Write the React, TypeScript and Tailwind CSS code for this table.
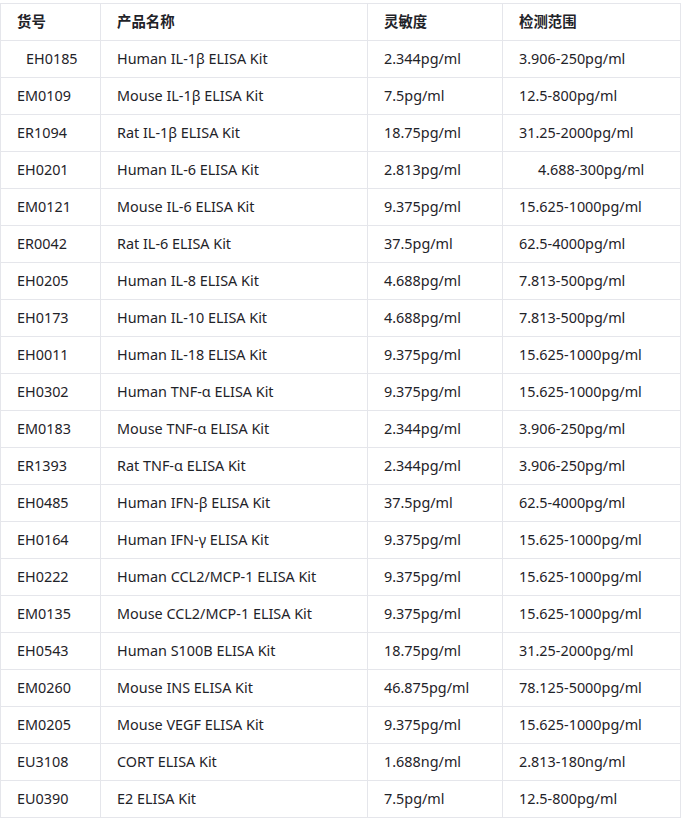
import React from 'react';

const rows = [
  ["EH0185", "Human IL-1β ELISA Kit", "2.344pg/ml", "3.906-250pg/ml"],
  ["EM0109", "Mouse IL-1β ELISA Kit", "7.5pg/ml", "12.5-800pg/ml"],
  ["ER1094", "Rat IL-1β ELISA Kit", "18.75pg/ml", "31.25-2000pg/ml"],
  ["EH0201", "Human IL-6 ELISA Kit", "2.813pg/ml", "4.688-300pg/ml"],
  ["EM0121", "Mouse IL-6 ELISA Kit", "9.375pg/ml", "15.625-1000pg/ml"],
  ["ER0042", "Rat IL-6 ELISA Kit", "37.5pg/ml", "62.5-4000pg/ml"],
  ["EH0205", "Human IL-8 ELISA Kit", "4.688pg/ml", "7.813-500pg/ml"],
  ["EH0173", "Human IL-10 ELISA Kit", "4.688pg/ml", "7.813-500pg/ml"],
  ["EH0011", "Human IL-18 ELISA Kit", "9.375pg/ml", "15.625-1000pg/ml"],
  ["EH0302", "Human TNF-α ELISA Kit", "9.375pg/ml", "15.625-1000pg/ml"],
  ["EM0183", "Mouse TNF-α ELISA Kit", "2.344pg/ml", "3.906-250pg/ml"],
  ["ER1393", "Rat TNF-α ELISA Kit", "2.344pg/ml", "3.906-250pg/ml"],
  ["EH0485", "Human IFN-β ELISA Kit", "37.5pg/ml", "62.5-4000pg/ml"],
  ["EH0164", "Human IFN-γ ELISA Kit", "9.375pg/ml", "15.625-1000pg/ml"],
  ["EH0222", "Human CCL2/MCP-1 ELISA Kit", "9.375pg/ml", "15.625-1000pg/ml"],
  ["EM0135", "Mouse CCL2/MCP-1 ELISA Kit", "9.375pg/ml", "15.625-1000pg/ml"],
  ["EH0543", "Human S100B ELISA Kit", "18.75pg/ml", "31.25-2000pg/ml"],
  ["EM0260", "Mouse INS ELISA Kit", "46.875pg/ml", "78.125-5000pg/ml"],
  ["EM0205", "Mouse VEGF ELISA Kit", "9.375pg/ml", "15.625-1000pg/ml"],
  ["EU3108", "CORT ELISA Kit", "1.688ng/ml", "2.813-180ng/ml"],
  ["EU0390", "E2 ELISA Kit", "7.5pg/ml", "12.5-800pg/ml"],
];

const cell = "border border-[#e5e6eb] h-[37px] px-4 py-0 text-left align-middle";

const App = () => {
  return (
    <div className="bg-white w-[682px] h-[821px] pt-[3px] text-[14.4px] text-[#1f2329]" style={{ fontFamily: '"Noto Sans", "Noto Sans CJK SC", sans-serif' }}>
      <table className="border-collapse w-[680px] table-fixed">
        <colgroup>
          <col className="w-[100px]" />
          <col className="w-[267px]" />
          <col className="w-[135px]" />
          <col className="w-[178px]" />
        </colgroup>
        <thead>
          <tr>
            <th className={`${cell} font-bold`}>货号</th>
            <th className={`${cell} font-bold`}>产品名称</th>
            <th className={`${cell} font-bold`}>灵敏度</th>
            <th className={`${cell} font-bold`}>检测范围</th>
          </tr>
        </thead>
        <tbody>
          {rows.map((r, i) => (
            <tr key={i}>
              <td className={`${cell} ${i === 0 ? 'pl-[25px]' : ''}`}>{r[0]}</td>
              <td className={cell}>{r[1]}</td>
              <td className={cell}>{r[2]}</td>
              <td className={`${cell} ${i === 3 ? 'pl-[35px]' : ''}`}>{r[3]}</td>
            </tr>
          ))}
        </tbody>
      </table>
    </div>
  );
};

export default App;
